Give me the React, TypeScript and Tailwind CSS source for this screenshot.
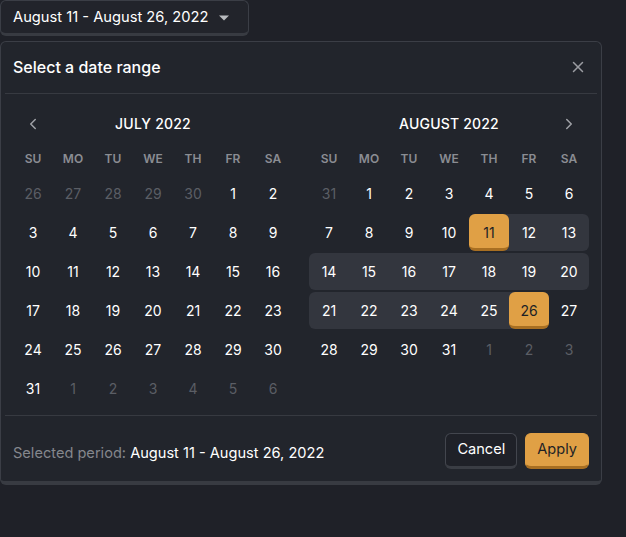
import { ChevronLeft, ChevronRight, X } from "lucide-react";

type Day = { n: number; muted?: boolean };

const WEEKDAYS = ["SU", "MO", "TU", "WE", "TH", "FR", "SA"];

function buildMonth(lead: number[], count: number, trail: number[]): Day[] {
  return [
    ...lead.map((n) => ({ n, muted: true })),
    ...Array.from({ length: count }, (_, i) => ({ n: i + 1 })),
    ...trail.map((n) => ({ n, muted: true })),
  ];
}

const JULY = buildMonth([26, 27, 28, 29, 30], 31, [1, 2, 3, 4, 5, 6]);
const AUGUST = buildMonth([31], 31, [1, 2, 3]);

const RANGE_START = 11;
const RANGE_END = 26;

function DayCell({ day, inRange }: { day: Day; inRange: boolean }) {
  const isEdge = inRange && (day.n === RANGE_START || day.n === RANGE_END);
  if (isEdge) {
    return (
      <div className="h-[37px] flex items-center justify-center rounded-md bg-[#e0a045] border-b-[3px] border-[#a86f22] text-[#1d1f25] text-sm pt-[3px]">
        {day.n}
      </div>
    );
  }
  return (
    <div
      className={
        day.muted
          ? "h-[37px] flex items-center justify-center text-sm text-[#5b5e65]"
          : "h-[37px] flex items-center justify-center text-sm text-white"
      }
    >
      {day.n}
    </div>
  );
}

function Month({
  title,
  days,
  side,
  highlight,
}: {
  title: string;
  days: Day[];
  side: "left" | "right";
  highlight?: boolean;
}) {
  const rows: Day[][] = [];
  for (let i = 0; i < days.length; i += 7) rows.push(days.slice(i, i + 7));

  return (
    <div className="w-[280px]">
      <div className="h-[37px] grid grid-cols-7 items-center">
        <div className="flex justify-center text-[#a0a2a7]">
          {side === "left" && <ChevronLeft size={18} strokeWidth={2} />}
        </div>
        <div className="col-span-5 text-center text-sm font-medium text-white tracking-[0.2px]">
          {title}
        </div>
        <div className="flex justify-center text-[#a0a2a7]">
          {side === "right" && <ChevronRight size={18} strokeWidth={2} />}
        </div>
      </div>
      <div className="h-[33px] grid grid-cols-7 items-center">
        {WEEKDAYS.map((w) => (
          <div key={w} className="text-center text-xs font-semibold text-[#8b8d93]">
            {w}
          </div>
        ))}
      </div>
      <div className="flex flex-col gap-[2px]">
        {rows.map((row, ri) => {
          const cells = row.map((d) => {
            const inRange =
              !!highlight && !d.muted && d.n >= RANGE_START && d.n <= RANGE_END;
            return { d, inRange };
          });
          const first = cells.findIndex((c) => c.inRange);
          const last = cells.map((c) => c.inRange).lastIndexOf(true);
          return (
            <div key={ri} className="grid grid-cols-7">
              {cells.map((c, ci) => {
                const rangeCls = c.inRange
                  ? [
                      "bg-[#33363e]",
                      ci === first ? "rounded-l-md" : "",
                      ci === last ? "rounded-r-md" : "",
                    ].join(" ")
                  : "";
                return (
                  <div key={ci} className={rangeCls}>
                    <DayCell day={c.d} inRange={c.inRange} />
                  </div>
                );
              })}
            </div>
          );
        })}
      </div>
    </div>
  );
}

export default function App() {
  return (
    <div
      className="min-h-[537px] w-full bg-[#1f2128] text-white"
      style={{ fontFamily: "Inter, 'Noto Sans', sans-serif" }}
    >
      <button className="h-[36px] w-[249px] pl-3 pr-3 pt-px flex items-center justify-between rounded-md border border-[#3b3e46] border-b-[3px] border-b-[#383b42] bg-[#22242b] text-[14.7px] text-white">
        <span>August 11 - August 26, 2022</span>
        <svg width="12" height="6" viewBox="0 0 12 6" className="mr-[6px]">
          <path d="M1 0.5h10L6 5.5z" fill="#b9bbbf" />
        </svg>
      </button>

      <div className="mt-[5px] w-[602px] rounded-md border border-[#3b3e46] border-b-[4px] border-b-[#383b42] bg-[#22252c] p-1">
        <div className="h-[48px] px-2 pb-[6px] flex items-center justify-between border-b border-[#373a41]">
          <h2 className="text-base font-medium text-white">Select a date range</h2>
          <X size={18} strokeWidth={2} className="text-[#9a9ca1] mr-[2px]" />
        </div>

        <div className="px-2 pt-[11px] pb-[8px] flex gap-4 border-b border-[#373a41]">
          <Month title="JULY 2022" days={JULY} side="left" />
          <Month title="AUGUST 2022" days={AUGUST} side="right" highlight />
        </div>

        <div className="px-2 pt-[17px] pb-[8px] flex items-center justify-between">
          <p className="text-[14.6px] text-[#85878d] pt-[5px]">
            Selected period: <span className="text-white">August 11 - August 26, 2022</span>
          </p>
          <div className="flex gap-2">
            <button className="h-[36px] px-[11px] rounded-md border border-[#43464e] border-b-[3px] border-b-[#3a3d44] bg-[#1f2128] text-[14.6px] text-white">
              Cancel
            </button>
            <button className="h-[36px] px-[11px] rounded-md border border-[#e0a045] border-b-[3px] border-b-[#a86f22] bg-[#e0a045] text-[14.6px] text-[#1d1f25]">
              Apply
            </button>
          </div>
        </div>
      </div>
    </div>
  );
}
